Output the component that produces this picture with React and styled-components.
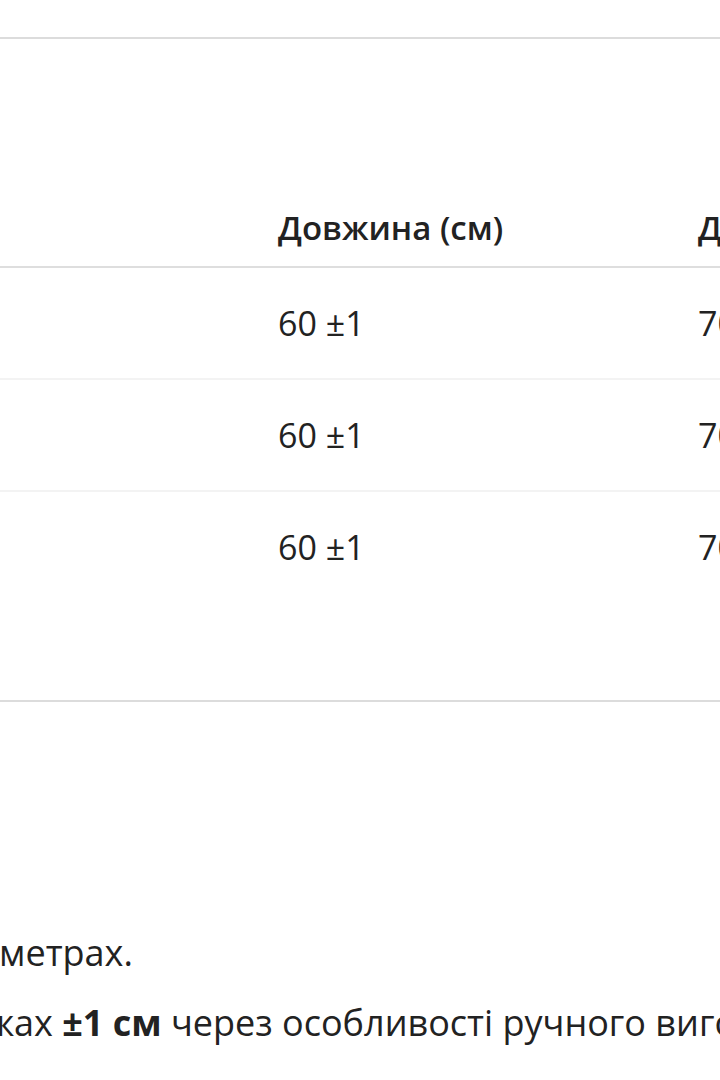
import styled, { createGlobalStyle } from "styled-components";

const GlobalStyle = createGlobalStyle`
  html, body {
    margin: 0;
    padding: 0;
    background: #ffffff;
  }
  body {
    font-family: "Open Sans", "Noto Sans", sans-serif;
    color: #222222;
  }
`;

const sizes = [
  { size: "S", length: "60 ±1", sleeve: "70 ±1" },
  { size: "M", length: "60 ±1", sleeve: "70 ±1" },
  { size: "L", length: "60 ±1", sleeve: "70 ±1" },
];

const Page = styled.div`
  width: 720px;
  height: 1080px;
  overflow: hidden;
`;

const Section = styled.section`
  margin: 37px 0 0 -162px;
  padding: 151px 0 96px;
  border-top: 2px solid #dcdcdc;
  border-bottom: 2px solid #dcdcdc;
  width: 1400px;
`;

const Table = styled.table`
  border-collapse: separate;
  border-spacing: 0;
  table-layout: fixed;
  width: 1260px;
  font-size: 34px;
`;

const Th = styled.th`
  text-align: left;
  font-size: 33px;
  font-weight: 600;
  height: 74px;
  padding: 0 20px 2px;
  vertical-align: middle;
  border-bottom: 2px solid #dedede;
  white-space: nowrap;
`;

const Td = styled.td`
  height: 110px;
  padding: 0 20px;
  vertical-align: middle;
  white-space: nowrap;
  border-bottom: 2px solid ${(p) => (p.$last ? "transparent" : "#f3f3f3")};
`;

const Notes = styled.div`
  margin: 226px 0 0 -460px;
  font-size: 36px;
  white-space: nowrap;
`;

const Note = styled.p`
  margin: 0 0 20px;
  line-height: 50px;
`;

export default function App() {
  return (
    <Page>
      <GlobalStyle />
      <Section>
        <Table>
          <thead>
            <tr>
              <Th>Розмір</Th>
              <Th>Довжина (см)</Th>
              <Th>Довжина рукава (см)</Th>
            </tr>
          </thead>
          <tbody>
            {sizes.map((row, i) => (
              <tr key={row.size}>
                <Td $last={i === sizes.length - 1}>{row.size}</Td>
                <Td $last={i === sizes.length - 1}>{row.length}</Td>
                <Td $last={i === sizes.length - 1}>{row.sleeve}</Td>
              </tr>
            ))}
          </tbody>
        </Table>
      </Section>
      <Notes>
        <Note>Усі виміри вказані в сантиметрах.</Note>
        <Note>
          Можливі відхилення в межах <b>±1 см</b> через особливості ручного виготовлення.
        </Note>
      </Notes>
    </Page>
  );
}
